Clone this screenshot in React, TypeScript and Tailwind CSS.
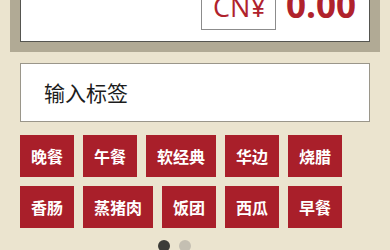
import React from "react";

const tags = ["晚餐", "午餐", "软经典", "华边", "烧腊", "香肠", "蒸猪肉", "饭团", "西瓜", "早餐"];

export default function App() {
  return (
    <div className="w-[390px] h-[250px] overflow-hidden bg-[#ebe4cf] font-['Open_Sans','Noto_Sans_CJK_SC',sans-serif]">
      {/* Amount panel (scrolled partly out of view) */}
      <div className="mx-[10px] -mt-[40px] bg-[#b1aa95] px-[10px] pb-[10px]">
        <div className="h-[82px] bg-white border border-[#555550] flex items-end justify-end pr-[13px] pb-[11px]">
          <div className="w-[75px] h-[50px] border border-[#8c8c8c] flex items-end justify-center pb-[9px]">
            <span className="text-[27px] leading-none font-medium text-[#b0222c] pl-[2px]">CN¥</span>
          </div>
          <span className="ml-[10px] mb-[8px] text-[35px] leading-none font-bold text-[#b0222c]">0.00</span>
        </div>
      </div>

      {/* Tag input */}
      <div className="mx-[20px] mt-[11px] h-[59px] bg-white border border-[#9a968a] flex items-center pl-[23px]">
        <span className="text-[21px] text-[#1c1c1c] font-['Noto_Sans_CJK_SC',sans-serif]">输入标签</span>
      </div>

      {/* Quick tags */}
      <div className="mt-[13px] px-[20px] flex flex-wrap gap-[9px] w-[372px]">
        {tags.map((t) => (
          <div
            key={t}
            className="h-[42px] px-[11px] bg-[#a91f2a] flex items-center justify-center text-white text-[16px] font-bold font-['Noto_Sans_CJK_SC',sans-serif]"
          >
            {t}
          </div>
        ))}
      </div>

      {/* Pager dots */}
      <div className="mt-[12px] pl-[158px] flex gap-[9px]">
        <div className="w-[12px] h-[12px] rounded-full bg-[#3c3c38]" />
        <div className="w-[12px] h-[12px] rounded-full bg-[#c4bfb2]" />
      </div>
    </div>
  );
}
